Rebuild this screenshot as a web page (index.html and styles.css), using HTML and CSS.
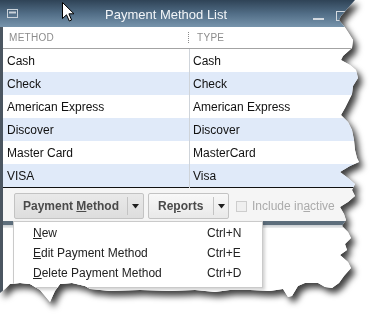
FILE: index.html
```html
<!DOCTYPE html>
<html>
<head>
<meta charset="utf-8">
<link rel="stylesheet" href="styles.css">
</head>
<body>
<div class="paper">
  <div class="sheet">
    <div class="titlebar">
      <svg class="tb-icon" width="11" height="9" viewBox="0 0 11 9"><rect x="0.5" y="0.5" width="10" height="8" fill="none" stroke="#c9d2da"/><rect x="2" y="2.5" width="7" height="2" fill="#c9d2da"/></svg>
      <span class="title">Payment Method List</span>
      <span class="tb-min"></span>
      <span class="tb-max"></span>
    </div>
    <div class="frame">
      <div class="head">
        <span class="h-method">METHOD</span><span class="h-sep"></span><span class="h-type">TYPE</span>
      </div>
      <div class="rows">
        <div class="row"><span class="c1">Cash</span><span class="c2">Cash</span></div>
        <div class="row alt"><span class="c1">Check</span><span class="c2">Check</span></div>
        <div class="row"><span class="c1">American Express</span><span class="c2">American Express</span></div>
        <div class="row alt"><span class="c1">Discover</span><span class="c2">Discover</span></div>
        <div class="row"><span class="c1">Master Card</span><span class="c2">MasterCard</span></div>
        <div class="row alt"><span class="c1">VISA</span><span class="c2">Visa</span></div>
      </div>
      <div class="toolbar">
        <div class="btn btn-pm pressed">
          <span class="btn-label">Payment <u>M</u>ethod</span>
          <span class="btn-arrow"><svg width="7" height="5" viewBox="0 0 7 5"><polygon points="0,0 7,0 3.5,4.5" fill="#1e1e1e"/></svg></span>
        </div>
        <div class="btn btn-rep">
          <span class="btn-label">Re<u>p</u>orts</span>
          <span class="btn-arrow"><svg width="7" height="5" viewBox="0 0 7 5"><polygon points="0,0 7,0 3.5,4.5" fill="#1e1e1e"/></svg></span>
        </div>
        <label class="chk"><span class="box"></span><span>Include in<u>a</u>ctive</span></label>
      </div>
      <div class="band"></div>
      <div class="rest"></div>
    </div>
    <div class="menu">
      <div class="mi"><span><u>N</u>ew</span><span>Ctrl+N</span></div>
      <div class="mi"><span><u>E</u>dit Payment Method</span><span>Ctrl+E</span></div>
      <div class="mi"><span><u>D</u>elete Payment Method</span><span>Ctrl+D</span></div>
    </div>
    <svg class="cursor" width="13" height="20" viewBox="0 0 13 20"><path d="M0.5,0.5 L0.5,16.5 L4.5,12.8 L7.3,19 L9.6,18 L6.9,11.8 L12,11.8 Z" fill="#fff" stroke="#000" stroke-width="1" stroke-linejoin="miter"/></svg>
  </div>
</div>
</body>
</html>
```

FILE: styles.css
```css
html, body {
  margin: 0;
  padding: 0;
  background: #ffffff;
}
body {
  width: 384px;
  height: 326px;
  overflow: hidden;
  font-family: "Liberation Sans", Arial, sans-serif;
}
.paper {
  width: 384px;
  height: 326px;
  filter: drop-shadow(4px 5px 3px rgba(0, 0, 0, 0.75));
}
.sheet {
  position: relative;
  width: 384px;
  height: 326px;
  background: #ffffff;
  display: flex;
  flex-direction: column;
  clip-path: polygon(0 0, 355px 0, 348px 8px, 341px 16px, 339px 20px, 344px 26px, 348px 32px, 353px 40px, 352px 48px, 343px 56px, 341px 60px, 350px 65px, 356px 70px, 358px 78px, 353px 86px, 352px 94px, 349px 100px, 345px 108px, 341px 115px, 348px 122px, 352px 130px, 354px 140px, 355px 150px, 357px 158px, 359px 162px, 350px 166px, 340px 172px, 348px 178px, 355px 184px, 352px 190px, 355px 196px, 348px 202px, 340px 207px, 344px 214px, 346px 220px, 342px 226px, 348px 232px, 351px 238px, 345px 244px, 347px 250px, 340px 255px, 348px 262px, 351px 268px, 344px 276px, 339px 283px, 332px 288px, 325px 287px, 318px 283px, 305px 283px, 298px 286px, 292px 296px, 288px 297px, 283px 289px, 270px 291px, 250px 290px, 230px 290px, 215px 292px, 195px 290px, 170px 291px, 140px 290px, 110px 291px, 90px 289px, 85px 286px, 72px 283px, 60px 284px, 55px 291px, 50px 302px, 45px 296px, 40px 290px, 30px 284px, 20px 283px, 10px 284px, 5px 289px, 0 293px);
}

/* title bar */
.titlebar {
  height: 27px;
  flex: 0 0 27px;
  display: flex;
  align-items: flex-start;
  padding-left: 7px;
  background: linear-gradient(to bottom, #2f4356 0%, #516d86 50%, #7794ac 100%);
  box-sizing: border-box;
}
.tb-icon {
  display: block;
  margin-top: 9px;
}
.title {
  flex: 0 0 208px;
  margin-left: 87px;
  color: #f2f5f8;
  font-size: 13px;
  line-height: 29px;
  white-space: nowrap;
}
.tb-min {
  width: 11px;
  height: 2px;
  margin-top: 18px;
  background: #d3d9df;
}
.tb-max {
  width: 8px;
  height: 8px;
  margin-top: 11px;
  margin-left: 12px;
  border: 1px solid #d3d9df;
}

/* frame */
.frame {
  flex: 1;
  display: flex;
  flex-direction: column;
  border-left: 3px solid #4b5661;
}
.head {
  height: 22px;
  flex: 0 0 22px;
  display: flex;
  align-items: center;
  border-bottom: 1px solid #a3a3a3;
  box-sizing: border-box;
  background: #ffffff;
  font-size: 10px;
  letter-spacing: 0.3px;
  color: #8c8c8c;
}
.h-method {
  width: 179px;
  padding-left: 6px;
}
.h-sep {
  width: 0;
  height: 11px;
  border-left: 1px dotted #8a8a8a;
}
.h-type {
  padding-left: 8px;
}
.rows {
  display: flex;
  flex-direction: column;
  border-bottom: 1px solid #111111;
}
.row {
  height: 23px;
  display: grid;
  grid-template-columns: 187px 1fr;
  font-size: 12px;
  line-height: 24px;
  color: #111111;
  background: #ffffff;
}
.row.alt {
  background: #e0eaf9;
}
.c1 {
  padding-left: 4px;
  border-right: 1px solid #cfd4da;
  white-space: nowrap;
}
.c2 {
  padding-left: 3px;
  white-space: nowrap;
}

/* toolbar */
.toolbar {
  height: 33px;
  flex: 0 0 33px;
  display: flex;
  align-items: flex-start;
  padding: 5px 0 0 11px;
  box-sizing: border-box;
  background: #f5f5f5;
}
.btn {
  height: 26px;
  display: flex;
  box-sizing: border-box;
  border: 1px solid #c3c3c3;
  border-radius: 2px;
  background: linear-gradient(to bottom, #f8f8f8, #e9e9e9);
  font-size: 12px;
  font-weight: bold;
  color: #4a4a4a;
}
.btn.pressed {
  background: linear-gradient(to bottom, #e9e9e9, #dddddd);
}
.btn-label {
  line-height: 24px;
  white-space: nowrap;
}
.btn-arrow {
  display: flex;
  align-items: center;
  justify-content: center;
  border-left: 1px solid #c3c3c3;
  margin: 3px 0;
  box-sizing: border-box;
}
.btn-arrow svg {
  display: block;
}
.btn-pm {
  width: 130px;
}
.btn-pm .btn-label {
  width: 104px;
  padding-left: 8px;
}
.btn-pm .btn-arrow {
  width: 16px;
}
.btn-rep {
  width: 81px;
  margin-left: 4px;
}
.btn-rep .btn-label {
  width: 55px;
  padding-left: 9px;
}
.btn-rep .btn-arrow {
  width: 15px;
}
.chk {
  height: 26px;
  display: flex;
  align-items: center;
  margin-left: 7px;
  font-size: 12px;
  color: #ababab;
  white-space: nowrap;
}
.box {
  width: 11px;
  height: 11px;
  box-sizing: border-box;
  border: 1px solid #cdcdcd;
  background: #efefef;
  margin-right: 5px;
}

.band {
  height: 7px;
  flex: 0 0 7px;
  background: linear-gradient(to bottom, #5d6e7c 0, #5d6e7c 4px, #c9cdd1 4px, #eceeef 7px);
}
.rest {
  flex: 1;
  background: #ffffff;
}

/* popup menu */
.menu {
  position: absolute;
  left: 13px;
  top: 221px;
  width: 250px;
  box-sizing: border-box;
  padding: 1px 0 4px;
  background: #ffffff;
  border: 1px solid #cacaca;
  box-shadow: 2px 2px 3px rgba(0, 0, 0, 0.18);
  font-size: 12px;
  color: #222222;
}
.mi {
  height: 20px;
  line-height: 20px;
  display: grid;
  grid-template-columns: 174px auto;
  padding-left: 19px;
  white-space: nowrap;
}

.cursor {
  position: absolute;
  left: 62px;
  top: 2px;
}
```
